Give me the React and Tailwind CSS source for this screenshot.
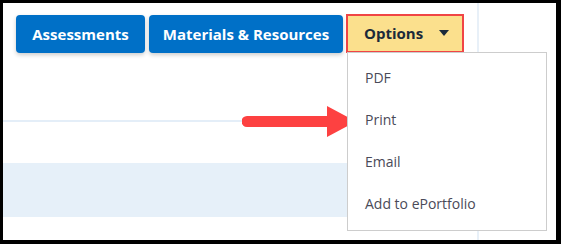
export default function App() {
  const font = { fontFamily: '"Open Sans", "Liberation Sans", sans-serif' };
  return (
    <div className="w-[561px] h-[244px] bg-black pt-[3px] pl-[3px] pr-[5px] pb-[4px]" style={font}>
      <div className="relative w-full h-full bg-white flex overflow-hidden">
        <div className="w-[474px] flex flex-col">
          <div className="flex items-start gap-[4px] pl-[13px] pt-[11px] h-[117px]">
            <button className="mt-[1px] w-[129px] h-[38px] rounded-[4px] bg-[#0070c7] text-white text-[15px] font-bold shadow-[0_2px_4px_rgba(0,0,0,0.2)]">
              Assessments
            </button>
            <button className="mt-[1px] w-[194px] h-[38px] rounded-[4px] bg-[#0070c7] text-white text-[15px] font-bold shadow-[0_2px_4px_rgba(0,0,0,0.2)]">
              Materials &amp; Resources
            </button>
            <button className="ml-[-1px] w-[118px] h-[39px] border-[2px] border-[#f04545] bg-[#fbe08d] text-[#1b2a3a] text-[15px] font-bold flex items-center pl-[16px] gap-[16px]">
              <span>Options</span>
              <svg width="10" height="7" viewBox="0 0 10 7"><path d="M0 0H10L5 6Z" fill="#1b2a3a" /></svg>
            </button>
          </div>
          <div className="h-[2px] bg-[#e4eef8]"></div>
          <div className="h-[41px]"></div>
          <div className="h-[54px] bg-[#e6f0f9]"></div>
        </div>
        <div className="w-[2px] bg-[#e8f0f8]"></div>
        <div className="flex-1"></div>

        <svg className="absolute left-[239px] top-[103px]" width="115" height="31" viewBox="0 0 115 31">
          <path d="M5 10H85V0L114 15.5L85 31V21H5A5.5 5.5 0 0 1 5 10Z" fill="#fd4141" />
        </svg>

        <div className="absolute left-[344px] top-[49px] w-[200px] h-[179px] bg-white border border-[#cdcdcd] pt-[15px] text-[14px] text-[#4a4a58]">
          <div className="pl-[17px] h-[42px] leading-[20px]">PDF</div>
          <div className="pl-[17px] h-[42px] leading-[20px]">Print</div>
          <div className="pl-[17px] h-[42px] leading-[20px]">Email</div>
          <div className="pl-[17px] h-[42px] leading-[20px]">Add to ePortfolio</div>
        </div>
      </div>
    </div>
  );
}
